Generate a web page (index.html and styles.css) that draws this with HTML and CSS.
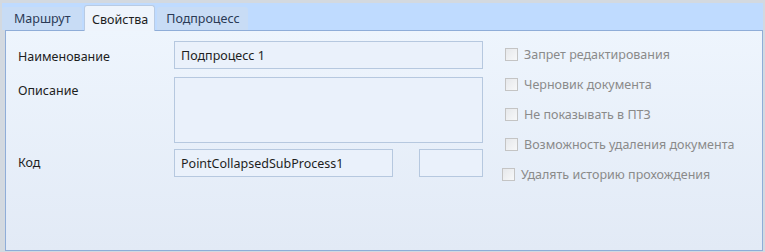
FILE: index.html
```html
<!DOCTYPE html>
<html lang="ru">
<head>
    <meta charset="UTF-8">
    <title>Свойства</title>
    <link rel="stylesheet" href="styles.css">
</head>
<body>

    <div class="frame">
        <!-- Tab strip -->
        <div class="tabs">
            <div class="tab">Маршрут</div>
            <div class="tab active">Свойства</div>
            <div class="tab">Подпроцесс</div>
        </div>

        <!-- Properties page -->
        <div class="page">
            <div class="fields">
                <div class="row">
                    <div class="label">Наименование</div>
                    <div class="input wide">Подпроцесс 1</div>
                </div>
                <div class="row memo-row">
                    <div class="label">Описание</div>
                    <div class="input wide memo"></div>
                </div>
                <div class="row code-row">
                    <div class="label">Код</div>
                    <div class="input code">PointCollapsedSubProcess1</div>
                    <div class="input small"></div>
                </div>
            </div>

            <div class="checks">
                <div class="check"><span class="box"></span>Запрет редактирования</div>
                <div class="check"><span class="box"></span>Черновик документа</div>
                <div class="check"><span class="box"></span>Не показывать в ПТЗ</div>
                <div class="check"><span class="box"></span>Возможность удаления документа</div>
                <div class="check last"><span class="box"></span>Удалять историю прохождения</div>
            </div>
        </div>
    </div>

</body>
</html>
```

FILE: styles.css
```css
/* Basic reset */
* {
    margin: 0;
    padding: 0;
    box-sizing: border-box;
}

body {
    width: 765px;
    height: 252px;
    background: #d3d9e0;
    font-family: "Noto Sans", "Open Sans", sans-serif;
    font-size: 12px;
    color: #1e1e1e;
    overflow: hidden;
}

.frame {
    display: flex;
    flex-direction: column;
    height: 252px;
    padding: 3px 2px 1px 5px;
}

/* Tab strip */
.tabs {
    display: flex;
    align-items: flex-end;
    gap: 2px;
    height: 27px;
    margin-left: -3px;
    background: #bfdbff;
}

.tab {
    height: 23px;
    padding: 3px 8px 0 9px;
    background: #c8dcf5;
    border-radius: 3px 3px 0 0;
    color: #2b3a55;
    font-size: 12.5px;
}

.tabs .tab:first-child {
    width: 80px;
    padding-left: 12px;
}

.tab.active {
    height: 26px;
    padding-top: 5px;
    padding-left: 7px;
    padding-right: 6px;
    background: #eef4fc;
    border: 1px solid #b9cbe3;
    border-bottom: none;
    color: #1e1e1e;
    margin-bottom: -1px;
    position: relative;
    z-index: 1;
}

/* Page */
.page {
    flex: 1;
    display: flex;
    border: 1px solid #8fadd8;
    background: linear-gradient(to bottom, #eef5fd, #e2eaf6);
    padding: 10px 0 0 12px;
}

.fields {
    width: 477px;
}

.row {
    display: flex;
    margin-bottom: 8px;
}

.label {
    width: 156px;
    padding-top: 7px;
    font-size: 12.5px;
}

.memo-row {
    margin-bottom: 6px;
}

.memo-row .label {
    padding-top: 5px;
}

.code-row .label {
    padding-top: 5px;
}

.input {
    height: 28px;
    border: 1px solid #b6c8df;
    background: #eaf1fb;
    padding: 5px 0 0 6px;
    font-size: 12.5px;
}

.wide {
    width: 309px;
}

.memo {
    height: 66px;
}

.code {
    width: 219px;
    margin-right: 26px;
}

.small {
    width: 64px;
}

/* Checkboxes */
.checks {
    margin-top: -2px;
    padding-left: 10px;
    color: #8a8a8a;
}

.check {
    display: flex;
    align-items: center;
    height: 30px;
    font-size: 12.5px;
}

.check.last {
    margin-left: -3px;
}

.box {
    width: 13px;
    height: 13px;
    margin-right: 6px;
    border: 1px solid #c4c4c4;
    background: linear-gradient(135deg, #e6e8eb, #f7f8f9);
}
```
